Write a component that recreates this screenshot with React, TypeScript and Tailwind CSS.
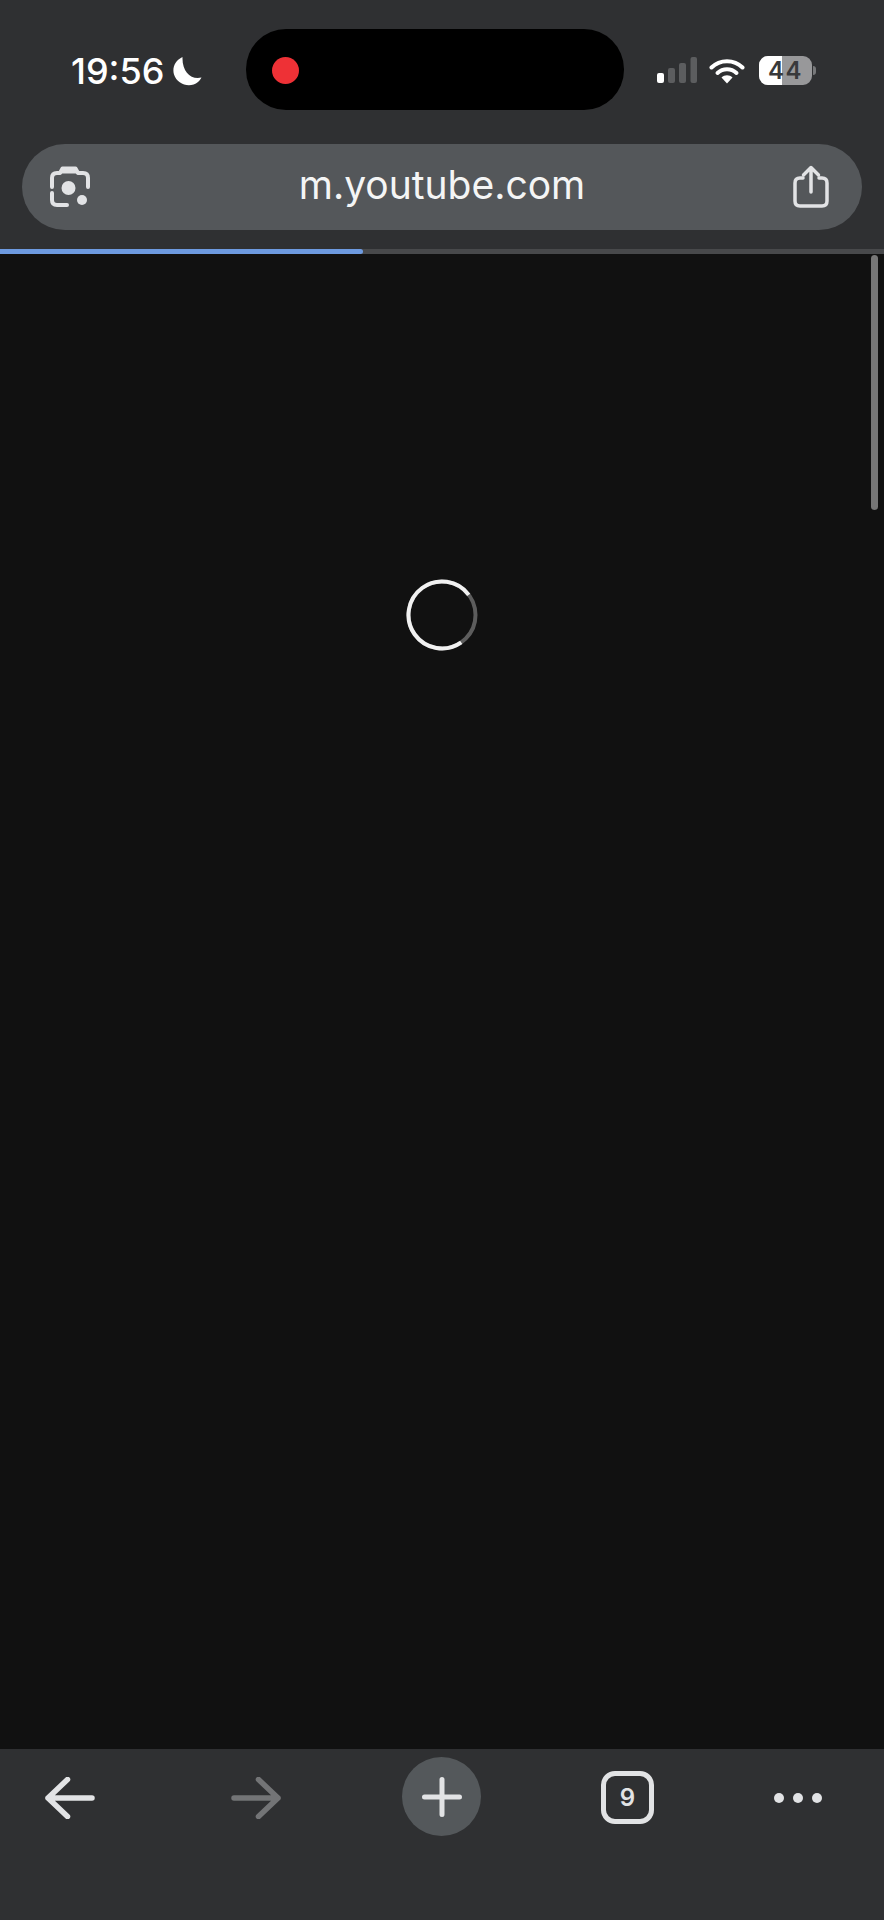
const ICON = "#e2e3e5";

const SignalBars = () => (
  <svg width="42" height="28" viewBox="0 0 42 28" className="shrink-0">
    <rect x="1" y="16" width="7" height="10" rx="2" fill="#ffffff" />
    <rect x="12" y="11" width="7" height="15" rx="2" fill="#5c5d5f" />
    <rect x="23" y="6" width="7" height="20" rx="2" fill="#5c5d5f" />
    <rect x="34.5" y="0" width="6.5" height="26" rx="2" fill="#5c5d5f" />
  </svg>
);

const Wifi = () => (
  <svg width="36" height="28" viewBox="0 0 36 28" className="shrink-0">
    <path d="M2.5 10.5C11 2 25 2 33.5 10.5" fill="none" stroke="#fff" strokeWidth="4" strokeLinecap="round" />
    <path d="M8.5 16C14 11 22 11 27.5 16" fill="none" stroke="#fff" strokeWidth="4" strokeLinecap="round" />
    <path d="M12.5 20.5C15.5 17.6 20.5 17.6 23.5 20.5L18 26.5Z" fill="#fff" />
  </svg>
);

const Battery = () => (
  <div className="flex items-center shrink-0">
    <div className="relative w-[53px] h-[29px] rounded-[9px] overflow-hidden bg-[#98989a] flex items-center justify-center">
      <div className="absolute left-0 top-0 bottom-0 w-[23px] bg-white" />
      <span className="relative text-[24px] leading-none font-semibold tracking-[1.5px] text-[#38393b]">44</span>
    </div>
    <div className="w-[3px] h-[9px] ml-[1px] rounded-r-full bg-[#77787a]" />
  </div>
);

const LensIcon = () => (
  <svg width="46" height="46" viewBox="0 0 46 46" fill="none" className="shrink-0">
    <path
      d="M5 23V14Q5 9 10 9H13L15.5 4.5H28.5L31 9H36Q41 9 41 14V23"
      stroke={ICON}
      strokeWidth="4"
      strokeLinecap="round"
      strokeLinejoin="round"
    />
    <path d="M15 4.5H29L32 9.5H12Z" fill={ICON} />
    <path d="M5 29V36Q5 41 10 41H20" stroke={ICON} strokeWidth="4" strokeLinecap="round" />
    <circle cx="21.5" cy="24" r="7" fill={ICON} />
    <circle cx="35" cy="36" r="5" fill={ICON} />
  </svg>
);

const ShareIcon = () => (
  <svg width="38" height="44" viewBox="0 0 38 44" fill="none" className="shrink-0">
    <path
      d="M11 13H8Q3 13 3 18V36Q3 41 8 41H30Q35 41 35 36V18Q35 13 30 13H27"
      stroke={ICON}
      strokeWidth="3.5"
      strokeLinecap="round"
    />
    <path d="M19 27V3M11.5 10L19 2.5L26.5 10" stroke={ICON} strokeWidth="3.5" strokeLinecap="round" strokeLinejoin="round" />
  </svg>
);

const Spinner = () => (
  <svg width="72" height="72" viewBox="0 0 72 72" fill="none">
    <circle cx="36" cy="36" r="33.5" stroke="#5d5d5d" strokeWidth="4" />
    <path d="M55.2 63.44A33.5 33.5 0 1 1 62.75 15.84" stroke="#f1f1f1" strokeWidth="4" />
  </svg>
);

const Arrow = ({ color, flip }: { color: string; flip?: boolean }) => (
  <svg width="50" height="42" viewBox="0 0 50 42" fill="none" className={flip ? "shrink-0 -scale-x-100" : "shrink-0"}>
    <path
      d="M47 21H3M22.5 2.5L3 21L22.5 39.5"
      stroke={color}
      strokeWidth="5.5"
      strokeLinecap="round"
      strokeLinejoin="round"
    />
  </svg>
);

const PlusIcon = () => (
  <svg width="40" height="40" viewBox="0 0 40 40" fill="none">
    <path d="M2.5 20H37.5M20 2.5V37.5" stroke={ICON} strokeWidth="5" strokeLinecap="round" />
  </svg>
);

export default function App() {
  return (
    <div className="relative flex flex-col h-[1920px] w-[884px] overflow-hidden bg-[#111111] font-['Inter',sans-serif]">
      {/* Status bar + address bar */}
      <div className="bg-[#2f3032] shrink-0 pt-[29px] pb-[19px]">
        <div className="flex items-center h-[81px]">
          <div className="w-[246px] flex items-center pl-[71px] pt-[3px]">
            <span className="text-[36px] leading-none font-medium text-white">19:56</span>
            <svg width="30" height="30" viewBox="0 0 30 30" className="ml-[8px]">
              <path d="M10.5 1C3 4.5 0 12 2 18.5C5 28.5 18 32.5 26 26C27.5 24.6 28.5 23.3 29.5 21.5C19 24 10 16 10.5 1Z" fill="#fff" />
            </svg>
          </div>
          <div className="w-[378px] h-[81px] rounded-[40px] bg-black flex items-center pl-[26px]">
            <div className="w-[27px] h-[27px] mt-[1px] rounded-full bg-[#ee3136]" />
          </div>
          <div className="flex items-center pl-[32px] pt-[2px] gap-[11px]">
            <SignalBars />
            <Wifi />
            <div className="ml-[3px]">
              <Battery />
            </div>
          </div>
        </div>
        <div className="mt-[34px] mx-[22px] h-[86px] rounded-[43px] bg-[#54575a] flex items-center pl-[25px] pr-[32px]">
          <LensIcon />
          <span className="flex-1 pb-[5px] pr-[1px] text-center text-[39px] leading-none text-[#f4f5f5]">m.youtube.com</span>
          <ShareIcon />
        </div>
      </div>

      {/* Load progress */}
      <div className="h-[5px] bg-[#48494b] shrink-0">
        <div className="h-full w-[363px] rounded-r-sm bg-[#6d9ae0]" />
      </div>

      {/* Page */}
      <div className="relative flex-1 flex justify-center pt-[325px] bg-[#111111]">
        <Spinner />
        <div className="absolute right-[6px] top-[1px] w-[7px] h-[255px] rounded-full bg-[#777777]" />
      </div>

      {/* Toolbar */}
      <div className="h-[171px] shrink-0 bg-[#2f3032] flex items-start pl-[45px] pt-[8px]">
        <div className="mt-[20px]">
          <Arrow color={ICON} />
        </div>
        <div className="mt-[20px] ml-[136px]">
          <Arrow color="#737476" flip />
        </div>
        <div className="ml-[121px] w-[79px] h-[79px] rounded-full bg-[#54585b] flex items-center justify-center">
          <PlusIcon />
        </div>
        <div className="ml-[120px] mt-[14px] w-[53px] h-[53px] rounded-[14px] border-[5px] border-[#e2e3e5] flex items-center justify-center">
          <span className="text-[24px] leading-none font-semibold text-[#e2e3e5]">9</span>
        </div>
        <div className="ml-[120px] mt-[36px] flex gap-[9px]">
          <div className="w-[10px] h-[10px] rounded-full bg-[#e2e3e5]" />
          <div className="w-[10px] h-[10px] rounded-full bg-[#e2e3e5]" />
          <div className="w-[10px] h-[10px] rounded-full bg-[#e2e3e5]" />
        </div>
      </div>
    </div>
  );
}
